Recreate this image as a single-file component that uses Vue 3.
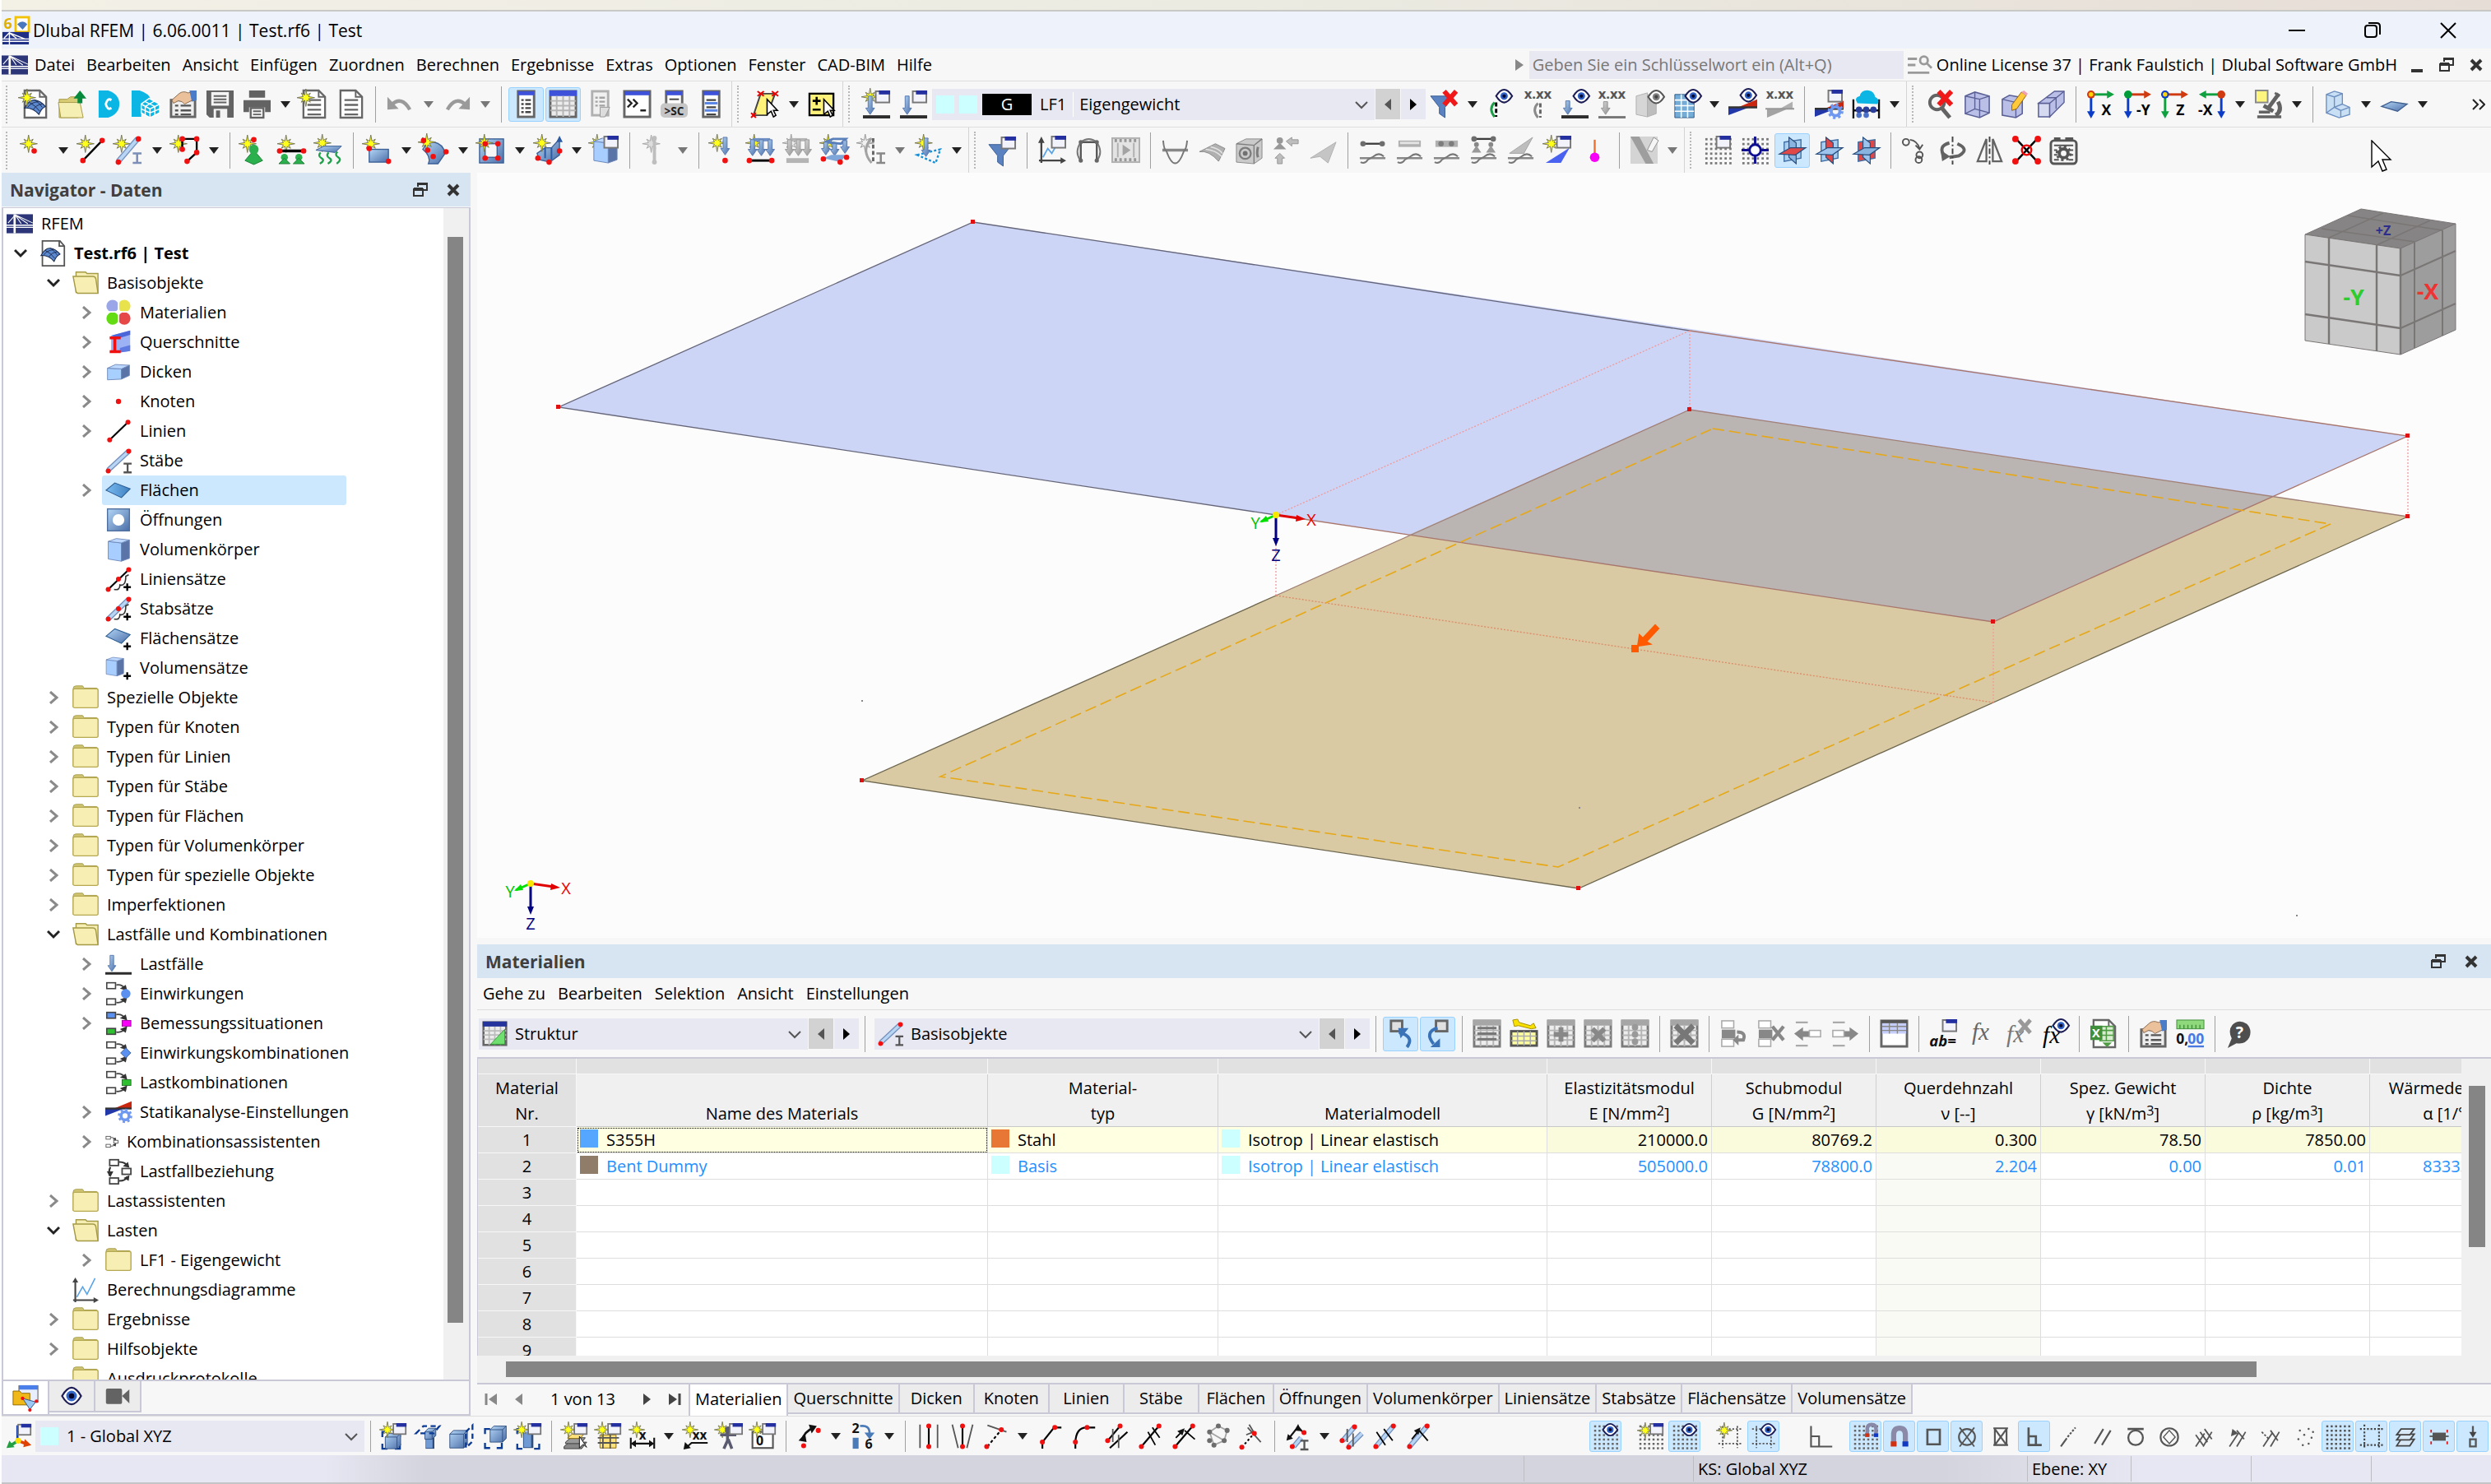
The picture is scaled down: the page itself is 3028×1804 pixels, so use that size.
<script setup>
// ---- small SVG building blocks, all drawn on a 36 x 36 grid ----
const S = (x = 9, y = 10, f = '#ffff1a') => {
  let p = ''
  for (let i = 0; i < 16; i++) {
    const r = i % 2 ? 3.6 : i % 4 === 0 ? 11 : 8
    const a = (i * Math.PI) / 8
    p += (i ? 'L' : 'M') + (x + r * Math.sin(a)).toFixed(1) + ' ' + (y - r * Math.cos(a)).toFixed(1)
  }
  return `<path d="${p}Z" fill="${f}" stroke="#77775a" stroke-width="1"/>`
}
const D = (x, y, r = 3.4, f = '#f01010') => `<circle cx="${x}" cy="${y}" r="${r}" fill="${f}"/>`
const L = (d, c = '#000', w = 2, x = '') => `<path d="${d}" fill="none" stroke="${c}" stroke-width="${w}" ${x}/>`
const F = (d, f, s = 'none', w = 1) => `<path d="${d}" fill="${f}" stroke="${s}" stroke-width="${w}"/>`
const R = (x, y, w, h, f, s = 'none', sw = 1) => `<rect x="${x}" y="${y}" width="${w}" height="${h}" fill="${f}" stroke="${s}" stroke-width="${sw}"/>`
const T = (x, y, t, s = 13, c = '#555', x2 = '') => `<text x="${x}" y="${y}" font-size="${s}" fill="${c}" font-weight="700" text-anchor="middle" ${x2}>${t}</text>`
const W = (x = 17, y = 1) => R(x, y + 1, 17, 14, '#f2f2fa', '#777', 2) + R(x + 4, y, 14, 5, '#2430a0')
const G = (s, o = 0.75) => `<g style="filter:grayscale(1);opacity:${o}">${s}</g>`
const EYE = (x = 26, y = 8) => F(`M${x - 10} ${y}Q${x} ${y - 16} ${x + 10} ${y}Q${x} ${y + 16} ${x - 10} ${y}Z`, '#fff', '#1d1d55', 2.2) + D(x, y, 4.6, '#2d5fc4') + D(x, y, 2.2, '#0a0a30')
const DN = (x, y1, y2, c = 'url(#steel)') => F(`M${x - 2.5} ${y1}H${x + 2.5}V${y2 - 8}H${x + 5.5}L${x} ${y2}L${x - 5.5} ${y2 - 8}H${x - 2.5}Z`, c, '#5878b0')
const I = (x, y, c = '#7c8fb8') => L(`M${x} ${y}H${x + 11}M${x} ${y + 12}H${x + 11}M${x + 5.5} ${y}V${y + 12}`, c, 2.6)
const grid = (x, y, n, m, st, f = '#8a8a8a', s = 4) => { let o = ''; for (let i = 0; i < n; i++) for (let j = 0; j < m; j++) o += R(x + i * st, y + j * st, s, s, f); return o }
const dots = (c = '#444') => grid(2, 3, 6, 6, 6, c, 2.8)
const TBL = (c = '#b5b5b5', h = '#3d52d8') => R(2, 2, 32, 32, '#ececec', '#666', 3) + R(1, 1, 34, 7, h) + L('M2 14H34M2 20H34M2 26H34M10 8V34M18 8V34M26 8V34', c, 2)
const DOC = (lines = true) => F('M5 1H24L32 9V35H5Z', '#fff', '#666', 2.4) + L('M24 1V9H32', '#666', 2) + (lines ? L('M10 13H27M10 19H27M10 25H27M10 31H27', '#666', 2.4) : '')
const MESH = (x, y) => `<g transform="translate(${x},${y})">${F('M0 11Q6 0 13 1Q20 2 26 9Q21 11 18 19Q10 10 0 11Z', '#5b88cf', '#1c2c50', 1.2)}${L('M6 4Q14 8 19 15M13 1Q20 6 22 10M4 10Q8 4 17 3M11 13Q14 7 22 6', '#1c2c50', 1)}</g>`
const LOGO = R(0, 5, 36, 26, '#2b3578') + L('M0 20H36M0 23H36', '#fff', 1.5) + L('M11 5V31', '#fff', 3) + L('M11 7L2 17M12 6L20 18M12 6L29 18M12 6L36 17', '#fff', 1.2)
const BOX = (f1 = '#a8cdff', f2 = '#5a74a8', f3 = '#bdd8ff') => F('M4 7L22 9V34L4 31Z', f1, '#6b86b8') + F('M22 9L33 5V30L22 34Z', f2, '#6b86b8') + F('M4 7L15 3L33 5L22 9Z', f3, '#6b86b8')
const LINE = (a, b, c, d, w = 2.4) => L(`M${a} ${b}L${c} ${d}`, '#000', w) + D(a, b) + D(c, d)
const BAR = (a, b, c, d) => L(`M${a} ${b}L${c} ${d}`, '#7590bd', 7) + L(`M${a} ${b}L${c} ${d}`, '#b8d6f4', 4)
const COMB = (a, b, c) => R(2, 3, 12, 8, a, '#444', 1.8) + R(2, 25, 12, 8, b, '#444', 1.8) + L('M15 6Q24 5 27 12M15 30Q24 31 27 24', '#444', 2) + F('M30 14L20 11L28 6Z', '#333') + F('M30 22L20 26L28 31Z', '#333') + c
const PRISM = (c = '#2bb04e', x = 18) => F(`M${x - 11} 31L${x} 18L${x + 11} 31L${x} 36Z`, c, '#1c7c36') + D(x, 17, 6, c)
const WAVE = L('M2 28H34', '#888', 2.4) + L('M3 33Q8 36 12 30L19 26Q26 20 32 26', '#777', 2)
const AX = (c1, c2, c3, t, flip) => L(flip ? 'M30 6H10' : 'M6 6H27', c1, 3) + F(flip ? 'M2 6L11 1V11Z' : 'M35 6L26 1V11Z', c1) + L(flip ? 'M30 8V28' : 'M6 8V28', c2, 3) + F(flip ? 'M30 36L25 27H35Z' : 'M6 36L1 27H11Z', c2) + D(flip ? 30 : 6, 6, 5, c3) + (flip || c3 === '#009c3a' ? '' : D(6, 6, 2.8, '#ffd400')) + T(flip ? 10 : 25, 32, t, 18, '#000')
const PL = (a, b, c) => F('M8 8L29 5V28L8 32Z', a, '#3f6da3', 1.4) + F('M14 2L23 9V35L14 27Z', b, '#274b7a', 1.2) + F('M2 23L16 15L35 15L22 24Z', c, '#274b7a', 1.2)
const WEDGE = F('M0 18H26L0 28Z', '#2238a8') + F('M36 8V18H12Z', '#c8260f') + L('M0 18H36', '#333', 2.6)
const XXX = T(18, 11, 'x.xx', 17, '#555')
const GEAR = (x, y, c = '#6f98f0') => `<circle cx="${x}" cy="${y}" r="5.5" fill="none" stroke="${c}" stroke-width="4"/><circle cx="${x}" cy="${y}" r="8.4" fill="none" stroke="${c}" stroke-width="3" stroke-dasharray="3.2 3.4"/>`
const HAND = F('M4 13L13 5Q18 1 24 4L30 3V13L20 18Q17 14 12 14L6 17Z', '#eac19b', '#8a6a50') + F('M26 1H35V13L29 15Z', '#4a7cc8')
const FUN = F('M1 8H30L19 22V35L12 30V22Z', '#5a82c0', '#3c5f95')
const STK = F('M3 32L10 26H34L27 35H3Z', '#888', '#333') + F('M5 26L12 20H32L26 28H5Z', '#999', '#333') + F('M8 20L14 15H30L25 21H8Z', '#ffe27a', '#7a5a00') + F('M24 18V34L29 29L34 33Z', '#fff', '#000')
const CUBE2 = (x, y, s) => F(`M${x} ${y + 5}L${x + 5} ${y}H${x + s + 5}V${y + s}L${x + s} ${y + s + 5}H${x}Z`, 'url(#steel)', '#2d4d80') + L(`M${x} ${y + 5}H${x + s}V${y + s + 5}M${x + s} ${y + 5}L${x + s + 5} ${y}`, '#2d4d80', 1)
const CRN = (x, y, w, h) => L(`M${x} ${y + 7}V${y}H${x + 7}M${x + w - 7} ${y}H${x + w}V${y + 7}M${x} ${y + h - 7}V${y + h}H${x + 7}M${x + w - 7} ${y + h}H${x + w}V${y + h - 7}`, '#0b3a94', 2.6)
const GL = (d, w = 2) => L(d, '#555', w)
const CELL = (o) => G(TBL('#aaa', '#999'), 0.85) + o
const FXS = 'font-style="italic" style="font-weight:400;font-family:Liberation Serif,serif"'

const icons = {
  app: R(18, 1, 17, 19, '#fff', '#f2c200', 3) + F('M20 10Q27 3 33 10L27 17Z', '#4a78bf') + R(1, 20, 34, 16, '#1f2f86') + L('M1 29H35M1 32H35M10 20V36M10 21L3 28M10 21L19 28M10 21L30 29', '#fff', 1.5) + T(8, 16, '6', 19, '#e0b000'),
  logo: LOGO,
  new: DOC(false) + MESH(5, 12) + S(8, 10),
  open: F('M2 12H12L16 9H26V35H2Z', '#d8cc74', '#a89a48') + F('M1 16H28L32 35H4Z', '#f6efb4', '#a89a48') + F('M28 1L36 11H31V17H25V11H20Z', '#068a3c'),
  cloud1: F('M5 1H17Q31 6 31 18Q31 30 17 35H5Z', '#0bb6e4') + L('M21 13Q16 10 14 18Q16 26 21 23', '#fff', 3),
  cloud2: F('M0 1H10Q22 5 24 12L12 20V34H0Z', '#0bb6e4') + F('M22 11L35 18V29L23 35L12 29V18Z', '#0bb6e4', '#fff', 1.5) + L('M12 18L23 24L35 18M23 24V35M17 15L29 21V32M29 14L17 21V32M12 24L23 29L35 24', '#fff', 1.5),
  props: R(3, 13, 30, 21, '#eee', '#666', 3) + L('M8 20H12M15 20H28M8 26H12M15 26H28M8 31H12M15 31H28', '#555', 2.4) + HAND,
  save: F('M1 1H35V35H5L1 31Z', '#636363') + R(7, 3, 22, 17, '#f4f4f4') + L('M10 8H26M10 12H26M10 16H26', '#636363', 2) + R(10, 24, 17, 11, '#f4f4f4') + R(13, 26, 5, 9, '#636363'),
  print: R(8, 1, 20, 9, '#636363') + F('M1 13H35V28H28V22H8V28H1Z', '#636363') + R(10, 23, 16, 12, '#f4f4f4', '#636363', 2.4) + L('M13 27H23M13 31H23', '#636363', 2),
  docnew: DOC() + S(8, 10),
  doc: DOC(),
  undo: L('M7 19Q20 7 30 25', '#9a9a9a', 4.5) + F('M2 9V25L16 24Z', '#9a9a9a'),
  redo: L('M29 19Q16 7 6 25', '#9a9a9a', 4.5) + F('M34 9V25L20 24Z', '#9a9a9a'),
  nav: R(8, 2, 20, 32, '#fff', '#666', 3) + R(8, 2, 20, 5, '#3d52d8') + L('M12 13H15M17 13H24M12 18H15M17 18H24M12 23H15M17 23H24M12 28H15M17 28H24', '#444', 2.4),
  table: TBL(),
  list: G(R(8, 2, 20, 30, '#eee', '#999', 3) + L('M12 10H15M17 10H24M12 15H15M17 15H24M12 20H15M17 20H24', '#888', 2.4)) + F('M18 22H30L24 34H18Z', '#ddd', '#999'),
  console: R(2, 2, 32, 32, '#fff', '#666', 3) + R(2, 2, 32, 5, '#3d52d8') + L('M6 12L11 17L6 22M13 12L18 17L13 22M22 26H29', '#222', 2.4),
  sc: R(8, 2, 20, 18, '#fff', '#666', 3) + R(8, 2, 20, 5, '#3d52d8') + L('M12 12H24', '#444', 2) + `<rect x="1" y="17" width="34" height="18" rx="5" fill="#c6c6c6"/>` + T(18, 32, '&gt;SC', 14, '#222'),
  prop2: R(8, 2, 20, 32, '#fff', '#666', 3) + R(8, 2, 20, 5, '#3d52d8') + L('M12 13H24M12 22H24M12 31H24', '#444', 2.4) + L('M10 17H26M10 26H26', '#5a86e8', 3),
  sel: F('M12 5H30L20 32H3Z', '#fff27a', '#444', 2) + L('M26 2L34 8M34 2L26 8M8 2L16 8M16 2L8 8M0 29L6 35M6 29L0 35', '#e00', 2) + F('M20 12V31L25 27L28 34L31 32L28 26H33Z', '#fff', '#000', 1.6),
  selpm: R(2, 5, 30, 27, '#fff27a', '#000', 2.4) + L('M6 14H16M11 9V19M6 25H16', '#000', 2.6) + F('M20 12V31L25 27L28 34L31 32L28 26H33Z', '#fff', '#000', 1.6),
  lcnew: S(10, 9) + DN(10, 8, 31) + W() + R(1, 32, 34, 4, '#2d2d2d'),
  lc: DN(10, 8, 31) + W() + R(1, 32, 34, 4, '#2d2d2d'),
  filtx: FUN + L('M18 2L33 19M33 2L18 19', '#f01818', 6),
  eye1: L('M10 16Q2 24 10 34', '#1f9c48', 3) + L('M12 16V34', '#000', 3, 'stroke-dasharray="5 3"') + EYE(22, 8),
  xxx1: XXX + G(L('M18 17Q10 25 18 35', '#666', 3) + L('M21 17V35', '#333', 3, 'stroke-dasharray="5 3"')),
  eye2: DN(9, 14, 31) + EYE() + R(1, 32, 34, 4, '#2d2d2d'),
  xxx2: XXX + G(DN(10, 15, 31)) + R(1, 33, 34, 3, '#777'),
  eye3: G(F('M2 8L16 4V34L2 31Z', '#ccc', '#999') + F('M16 6L27 10V30L16 34Z', '#aaa', '#999') + EYE(27, 9)),
  eye4: F('M4 6H28V35H4Z', '#74acd8', '#2e5a88') + L('M4 13H28M4 20H28M4 27H28M12 6V35M20 6V35', '#fff', 1.6) + EYE(27, 8),
  eye5: `<g transform="translate(0,4)">${WEDGE}</g>` + EYE(25, 7),
  xxx3: XXX + G(F('M2 24H28L2 35Z', '#888') + F('M34 15V24H18Z', '#999') + L('M0 24H36', '#777', 2)),
  calc: `<g transform="translate(0,6)">${WEDGE}</g>` + W(17, 0) + GEAR(26, 27),
  cloudcalc: L('M2 12V36M34 12V36M2 26H34', '#111', 2.4) + F('M7 17Q2 10 10 8Q12 0 21 1Q28 2 29 9Q36 12 32 18Z', '#0bb6e4') + D(9, 25, 4, '#2b3f9a') + D(18, 25, 4, '#2b3f9a') + D(27, 25, 4, '#2b3f9a') + D(9, 32, 3.4, '#4a70c8') + D(18, 32, 3.4, '#4a70c8'),
  zoomx: `<circle cx="14" cy="16" r="9" fill="none" stroke="#636363" stroke-width="4"/>` + L('M20 23L30 35', '#636363', 5) + L('M16 2L32 19M32 2L16 19', '#f01818', 6),
  iso: F('M3 8L15 3L33 8V29L21 35L3 30Z', '#b9bfe6', '#5a6096', 1.6) + L('M3 8L21 12L33 8M21 12V35M15 3V24L3 30M15 24L33 29', '#5a6096', 1.4),
  isopen: F('M3 12L12 7L28 10V30L20 35L3 32Z', '#b9bfe6', '#5a6096', 1.6) + L('M3 12L20 16L28 10M20 16V35', '#5a6096', 1.4) + F('M15 19L27 3L33 7L21 24L15 26Z', '#ffc93c', '#946000') + F('M27 3L30 1L35 5L33 8Z', '#f0a0b0'),
  iso2: F('M2 17H16V34H2Z', '#d6daf0', '#5a6096', 1.6) + F('M2 17L22 2H34V16L16 34V17Z', '#b9bfe6', '#5a6096', 1.4) + L('M16 17L34 2M12 10H24V24', '#5a6096', 1.4),
  ax: AX('#10a040', '#0a3cc8', '#d03a10', 'X'),
  ay: AX('#d03a10', '#0a3cc8', '#009c3a', '-Y'),
  az: AX('#d03a10', '#10a040', '#0a3cc8', 'Z'),
  anx: AX('#10a040', '#0a3cc8', '#d03a10', '-X', true),
  micro: R(2, 1, 15, 15, '#fdf57e', '#888', 2) + L('M17 24L31 5M12 20L24 27M30 15Q36 26 27 32', '#636363', 5) + L('M4 34H34M6 28H20', '#636363', 3.6) + L('M26 4L32 8', '#636363', 3),
  lshape: F('M4 6L14 2L24 5V18L33 22V31L20 35L4 29Z', '#c9dff4', '#6c8fc0', 1.4) + L('M4 6L14 9V22L4 29M14 9L24 5M14 22L24 18M14 22L22 26V35M22 26L33 22', '#6c8fc0', 1.4),
  plane: F('M2 21L14 15L34 18L22 27Z', 'url(#steel)', '#41608f', 1.4),
  // second row
  node: S(10, 10) + D(17, 19),
  line: S(10, 10) + LINE(7, 31, 31, 6),
  member: S(9, 10) + BAR(5, 32, 29, 4) + D(5, 33) + D(30, 4) + I(23, 22),
  poly: S(9, 10) + L('M14 17V4H32V21L20 32', '#000', 2.4) + D(14, 17) + D(14, 4) + D(32, 4) + D(32, 21) + D(20, 32),
  sup1: S(9, 10) + D(17, 5) + PRISM('#2bb04e', 17),
  sup2: S(11, 10) + LINE(3, 19, 33, 19, 3.6) + D(9, 27, 4.4, '#2bb04e') + D(27, 27, 4.4, '#2bb04e') + F('M2 35L9 28L16 35ZM20 35L27 28L34 35Z', '#2bb04e', '#1c7c36'),
  sup3: S(10, 9) + F('M2 18L12 13H34L26 21Z', 'url(#steel)', '#3b5f95') + L('M8 21Q4 25 9 28T7 35M18 21Q14 25 19 28T17 35M29 20Q25 24 30 27T28 35', '#1ea04c', 2.4),
  surf: S(9, 10) + R(7, 17, 24, 16, 'url(#steel)', '#3b5f95', 1.4) + D(7, 16) + D(31, 32),
  surf2: F('M3 17Q8 8 17 8Q28 10 31 22L22 35H10Q14 26 3 17Z', 'url(#steel)', '#3b5f95', 1.4) + S(8, 8) + D(4, 6) + D(32, 20) + D(16, 26) + D(9, 18),
  open2: R(3, 4, 30, 30, 'url(#steel)', '#3b5f95', 1.4) + R(10, 10, 15, 17, '#f6f6f6', '#3b5f95', 1.4) + S(9, 9) + D(10, 10) + D(26, 10) + D(10, 28) + D(26, 28),
  solid: F('M4 22L14 15H22L32 4V24L20 33L7 30Z', 'url(#steel)', '#3b5f95', 1.4) + L('M14 15V28M22 15V30', '#2c5aa0', 2) + S(10, 9) + D(5, 28) + D(19, 33) + D(32, 19) + F('M32 0L28 8H36Z', '#2c5aa0'),
  solid2: S(8, 9) + BOX() + W(17, 0),
  dis1: G(S(14, 10, '#ccc') + L('M18 3V33', '#999', 4) + D(18, 3, 3, '#999') + D(18, 33, 3, '#999'), 0.6),
  nload: S(10, 9) + DN(20, 2, 24) + D(20, 31),
  mload: S(10, 9) + L('M8 5H30', '#6f90c4', 4) + DN(8, 5, 25) + DN(19, 5, 25) + DN(30, 5, 25) + LINE(4, 31, 32, 31, 3),
  mload2: G(S(10, 9) + L('M8 5H30', '#999', 4) + DN(8, 5, 25) + DN(19, 5, 25) + DN(30, 5, 25) + L('M4 31H32', '#999', 6), 0.7),
  sload: S(10, 9) + L('M6 8L16 4H32L26 10Z', '#5a80bc', 3) + DN(7, 8, 24) + DN(18, 10, 25) + DN(31, 6, 22) + F('M4 28L14 24H33L25 33Z', '#7fa6d8') + D(4, 29) + D(25, 33) + D(33, 27),
  nonl: G(S(10, 9) + L('M18 3Q4 18 18 34', '#888', 3)) + L('M20 3V34', '#666', 3, 'stroke-dasharray="5 3"') + I(24, 22, '#888'),
  sect: S(12, 9) + L('M4 24L33 17L27 34Z', '#1890d8', 2.4, 'stroke-dasharray="3 2.4"') + DN(15, 3, 26),
  filt: `<g transform="translate(0,3)">${FUN}</g>` + W(),
  diag: L('M5 34V6M2 31H33', '#444', 2.4) + F('M5 1L9 9H1ZM36 31L29 27V35Z', '#444') + L('M7 27L13 16L18 22L25 10', '#5aa4e8', 1.8) + W(18, 0),
  frame: L('M8 30V8H28V30', '#555', 2.4) + L('M8 8Q18 0 28 8Q36 20 29 30M8 8Q0 20 7 30', '#777', 2) + D(8, 8, 2.6, '#666') + D(28, 8, 2.6, '#666') + D(8, 31, 2.6, '#666') + D(28, 31, 2.6, '#666'),
  film: G(R(1, 3, 34, 30, '#ddd', '#999', 2) + L('M4 6H33M4 30H33', '#777', 4, 'stroke-dasharray="3 3"') + L('M8 9V27M28 9V27', '#999', 2) + F('M14 11L24 18L14 25Z', '#888')),
  mom: L('M2 18H34', '#888', 3.4) + L('M3 6Q4 18 7 19Q18 50 29 19Q32 17 33 6', '#777', 2),
  stress: G(F('M2 20L22 10L34 16L26 32Q14 18 2 20Z', '#999', '#666') + L('M10 17Q22 18 30 26M16 14Q26 16 31 22', '#ddd', 1.6)),
  cube: G(F('M2 10L14 4H34V28L24 35L2 33Z', '#bbb', '#666') + L('M2 10L24 12L34 4M24 12V35', '#555', 1.4) + `<circle cx="13" cy="22" r="7" fill="none" stroke="#555" stroke-width="2.4"/>` + D(13, 22, 3, '#444') + L('M29 14Q27 22 29 27', '#555', 3)),
  react: G(D(10, 6, 4, '#777') + F('M2 17L10 9L18 17Z', '#777') + F('M18 7L25 2V5H33V10H25V13Z', '#aaa', '#777') + F('M10 22L16 28H13V35H7V28H4Z', '#aaa', '#777')),
  tri: G(F('M2 28L34 8L24 34L14 26Z', '#b5b5b5', '#999')),
  w1: G(LINE(6, 10, 30, 10)) + WAVE,
  w2: G(L('M4 10H32', '#999', 8) + L('M6 9H30', '#ddd', 3)) + WAVE,
  w3: G(L('M4 10H32', '#999', 8) + D(11, 10, 3.4, '#555') + D(24, 10, 3.4, '#555')) + WAVE,
  w4: G(LINE(6, 4, 30, 4)) + D(9, 11, 3, '#888') + D(27, 11, 3, '#888') + F('M3 21L9 12L15 21ZM21 21L27 12L33 21Z', '#999') + WAVE,
  w5: G(F('M4 22L33 2L22 22Z', '#aaa', '#888')) + WAVE,
  w6: F('M3 34L33 15L22 34Z', '#4a62f0') + S(10, 10) + W(17, 0),
  mag: L('M18 5V24', '#e87030', 2.4) + D(18, 27, 6, '#f800f8'),
  edit: G(R(1, 1, 34, 34, '#ccc') + F('M1 1H12L30 35H20Z', '#888') + F('M22 18L30 2L36 6L28 20Z', '#f5f5f5', '#777'), 0.8),
  g1: dots('#777') + W(16, 0),
  g2: dots('#777') + `<circle cx="18" cy="18" r="7" fill="#fff" stroke="#101090" stroke-width="3"/>` + L('M18 1V11M18 25V35M1 18H11M25 18H35', '#101090', 3),
  p1: PL('#a8cff0', '#8ab4e0', '#e04848'),
  p2: PL('#a8cff0', '#e04848', '#9cc4ec'),
  p3: PL('#e04848', '#9cc4ec', '#8ab4e0'),
  m1: GL('M11 5Q20 6 23 16M18 12L23 17L27 11') + `<circle cx="6" cy="8" r="4" fill="none" stroke="#555" stroke-width="2"/><circle cx="23" cy="24" r="4" fill="none" stroke="#555" stroke-width="2"/><circle cx="22" cy="30" r="4" fill="none" stroke="#555" stroke-width="2"/>`,
  m2: L('M8 26Q-1 13 14 9M24 10Q40 17 26 25L14 27', '#636363', 4) + F('M3 18L15 26L5 32Z', '#636363') + L('M18 1V36', '#444', 2, 'stroke-dasharray="7 3 2 3"'),
  m3: L('M14 4V32H3ZM22 4V32H33Z', '#636363', 2.4) + L('M18 1V36', '#444', 2, 'stroke-dasharray="7 3 2 3"'),
  m4: L('M4 3L32 33M32 3L4 33', '#000', 2.4) + D(4, 4, 4) + D(32, 4, 4) + D(4, 32, 4) + D(32, 32, 4) + `<circle cx="18" cy="18" r="6" fill="none" stroke="#e00" stroke-width="2.4"/>`,
  m5: `<rect x="2" y="6" width="32" height="29" rx="4" fill="none" stroke="#555" stroke-width="3"/>` + L('M6 4H14M20 4H30', '#555', 4) + GL('M6 12H30M6 18H10M26 18H30M6 24H10M26 24H30M6 30H12M24 30H30') + GEAR(18, 22, '#555'),
  // tree
  file: F('M4 1H28L34 8V35H4Z', '#fff', '#555', 2) + L('M27 1V8H34', '#555', 2) + MESH(2, 10),
  folder: F('M1 6Q1 2 5 2H14L16 5H33Q35 5 35 8V31H1Z', '#cfc472', '#a59a45') + `<rect x="1" y="6" width="34" height="26" rx="2" fill="#f7eeb4" stroke="#b5a850" stroke-width="1.4"/>`,
  folderopen: F('M5 3H18L20 5H35V31H5Z', '#f7eeb4', '#a59a45', 1.6) + F('M1 9H28Q31 9 32 12L35 32H7L5 30Z', '#f7eeb4', '#a59a45', 1.6),
  mat: D(10, 9, 8.5, '#9aa6e8') + D(26, 9, 8.5, '#e8e24c') + D(10, 26, 8.5, '#63dc14') + D(26, 26, 8.5, '#e64848') + L('M18 0V34M2 17H34', '#fff', 2),
  sec: F('M8 9L34 2V30L20 32L8 30Z', '#9cb2f4') + F('M8 9L34 2V8L20 12Z', '#4a66d8') + F('M20 26L34 22V30L20 32Z', '#5f7ae0') + L('M6 12H21M6 31H21M13 12V31', '#f01010', 4),
  thick: F('M3 13L22 14V28L3 29Z', '#a8d0ff', '#6b86b8') + F('M22 14L33 9V23L22 28Z', '#5a74a8', '#6b86b8') + F('M3 13L14 8L33 9L22 14Z', '#bdd8ff', '#6b86b8'),
  tnode: D(18, 18, 3.6),
  tline: LINE(6, 30, 31, 6),
  tmember: BAR(4, 31, 32, 5) + D(4, 32) + D(32, 5) + I(25, 22, '#555'),
  tsurf: F('M1 18L13 8L34 16L22 28Z', 'url(#surf)', '#2d5f95', 1.2),
  topen: R(3, 3, 30, 30, 'url(#steel)', '#4f6f9f', 1.6) + D(18, 18, 8, '#fff'),
  tsolid: BOX(),
  tls: LINE(4, 32, 32, 5) + D(18, 18) + L('M12 32Q20 34 20 26Q28 28 28 14L32 12', '#333', 1.8) + L('M30 24V34M25 29H35', '#000', 2.6),
  tms: BAR(4, 32, 32, 5) + D(4, 32) + D(32, 5) + D(18, 18) + L('M12 32Q20 34 20 26Q28 28 28 14L32 12', '#333', 1.8) + L('M30 24V34M25 29H35', '#000', 2.6),
  tss: F('M1 15L13 5L34 13L22 25Z', 'url(#steel)', '#2d5f95', 1.2) + L('M30 24V34M25 29H35', '#000', 2.6),
  tvs: `<g transform="translate(-2,1) scale(.82)">${BOX()}</g>` + L('M30 24V34M25 29H35', '#000', 2.6),
  tlc: DN(9, 6, 28) + R(0, 29, 36, 3.4, '#2d2d2d'),
  c1: COMB('#fff', '#fff', D(28, 18, 6.5, '#5a90f0')),
  c2: COMB('#5a90f0', '#2fc032', R(23, 14, 12, 8, '#f800f8', '#a000a0')),
  c3: COMB('#fff', '#fff', F('M28 11L35 18L28 25L21 18Z', '#5a90f0', '#3a5a90')),
  c4: COMB('#fff', '#fff', R(23, 14, 12, 8, '#2fc032', '#1c7020')),
  c5: COMB('#fff', '#fff', R(23, 14, 12, 8, '#fff', '#444', 1.8)),
  c6: R(6, 2, 12, 8, '#fff', '#444', 2) + R(6, 27, 12, 8, '#fff', '#444', 2) + R(23, 14, 12, 8, '#fff', '#444', 2) + L('M19 5Q28 5 30 11M19 31Q28 31 30 25M7 12Q4 18 6 24', '#333', 2.4) + F('M33 13L24 11L31 5ZM33 23L25 27L32 31ZM2 18H11L7 26Z', '#333'),
  stat: `<g transform="translate(0,-5)">${WEDGE}</g>` + GEAR(27, 23),
  tdiag: L('M4 35V5M1 32H33', '#444', 2.4) + F('M4 1L8 8H0ZM36 32L29 28V36Z', '#444') + L('M6 28L14 14L20 24L31 2', '#5aa4e8', 1.8),
  // navigator tabs
  t1: R(9, 2, 26, 22, '#e8eefb', '#888', 1.6) + R(9, 1, 26, 6, '#4a7ee8') + F('M1 9H10L13 12H24V28H1Z', '#f0b818', '#8a6400') + F('M14 19L32 24L24 34Z', '#9cc8f4', '#2c4c80') + D(14, 19, 2.4) + D(33, 23, 2.4) + D(24, 35, 2.4),
  eye: F('M2 18Q18 -10 34 18Q18 46 2 18Z', '#fff', '#1d1d55', 3) + D(18, 18, 9, '#3468c8') + D(18, 18, 4.6, '#08082c'),
  cam: `<rect x="2" y="8" width="22" height="21" rx="2" fill="#636363"/>` + F('M24 18L34 9V28Z', '#636363'),
  // table toolbar
  struct: TBL('#bbb', '#24349c') + F('M32 12V33H12Z', '#6fe070', '#2a9030'),
  act1: R(6, 2, 14, 13, '#e0e0e0', '#666', 3) + L('M16 16Q36 22 26 35', '#3a72b8', 4) + F('M15 11H28L18 24Z', '#3a72b8'),
  act2: R(16, 2, 14, 13, '#e0e0e0', '#666', 3) + L('M18 11Q1 16 13 31', '#3a72b8', 4) + F('M9 35H21V24Z', '#3a72b8'),
  k1: CELL(L('M6 11H30M6 18H30M6 25H30', '#777', 3)),
  k2: R(2, 15, 32, 18, '#ffffa0', '#555', 3) + L('M2 21H34M2 27H34M10 15V33M18 15V33M26 15V33', '#aaa', 1.6) + F('M4 1L10 0L12 4L26 8L30 5L33 11L27 12L11 8L6 9Z', '#f8e000', '#a89000'),
  k3: CELL(L('M18 10V28M9 19H27', '#888', 6)),
  k4: CELL(L('M11 12L26 27M26 12L11 27', '#888', 6)),
  k5: CELL(D(18, 10, 4, '#999') + D(18, 19, 4, '#999') + D(18, 28, 4, '#999')),
  kx: CELL(L('M7 8L29 30M29 8L7 30', '#777', 7)),
  r1: R(3, 2, 15, 9, '#fff', '#aaa', 1.6) + R(3, 13, 17, 11, '#888') + R(3, 25, 15, 9, '#fff', '#aaa', 1.6) + L('M22 16Q34 16 30 26H22', '#888', 4) + F('M24 19V33L17 26Z', '#888'),
  r2: R(3, 2, 15, 9, '#fff', '#aaa', 1.6) + R(3, 13, 17, 11, '#888') + R(3, 25, 15, 9, '#fff', '#aaa', 1.6) + L('M20 9L34 26M34 9L20 26', '#888', 4.4),
  r3: L('M3 4H18M3 33H18', '#aaa', 2.4) + F('M1 18L12 10V15H20V22H12V27Z', '#888') + R(20, 14, 14, 8, '#fff', '#aaa', 1.6),
  r4: L('M3 4H18M3 33H18', '#aaa', 2.4) + F('M35 18L24 10V15H16V22H24V27Z', '#888') + R(3, 14, 14, 8, '#fff', '#aaa', 1.6),
  ktab: R(2, 2, 32, 32, '#fff', '#666', 3) + R(3, 5, 30, 13, '#c5cdfa') + L('M3 9H33M3 14H33M12 5V18M22 5V18', '#888', 1.4) + R(2, 1, 32, 4, '#555'),
  ab: W(17, 0) + T(17, 34, 'ab=', 19, '#111', 'font-style="italic"'),
  fx: T(18, 26, 'fx', 30, '#666', FXS),
  fxx: T(15, 29, 'fx', 30, '#777', FXS) + L('M20 1L34 17M34 1L20 17', '#999', 5),
  fxe: T(14, 30, 'fx', 30, '#000', FXS) + EYE(26, 8),
  xls: DOC(false) + R(13, 9, 17, 18, '#d8ecd0', '#4f9c44', 1.6) + L('M13 14H30M13 20H30M21 9V27', '#4f9c44', 1.6) + R(1, 8, 15, 18, '#3f8f3c') + T(8, 23, 'X', 15, '#fff') + F('M16 29H28L22 35Z', '#4f9c44'),
  num: R(1, 1, 34, 11, '#8fd97c', '#3f8f3c') + L('M5 7V12M10 7V12M15 7V12M20 7V12M25 7V12M30 7V12', '#3f8f3c', 1.4) + T(8, 31, '0,', 18, '#111') + T(25, 31, '00', 18, '#4878e0') + L('M15 34H35', '#4878e0', 2.4),
  help: `<path d="M8 24Q3 14 9 7Q17 -1 27 6Q34 13 30 23Q25 32 14 30L3 36Z" fill="#4e4e4e"/>` + T(18, 24, '?', 20, '#fff'),
  // bottom toolbar
  cs: L('M16 22V3', '#1038a0', 3) + W(17, 1) + L('M17 24L6 31', '#20a040', 4) + F('M1 34L5 24L12 33Z', '#20a040') + L('M17 24L27 28', '#e04000', 4) + F('M35 30L26 22L24 33Z', '#e04000') + D(17, 24, 4, '#ffe000'),
  v0: CRN(2, 12, 24, 23) + CUBE2(6, 14, 16) + S(9, 9) + W(17, 0),
  v1: L('M21 16V35', '#2d4d80', 12) + L('M20 16V34', '#6f9ad4', 9) + CUBE2(14, 7, 10) + L('M2 14L12 4H34L26 14Z', '#0b3a94', 2.6, 'stroke-dasharray="7 5"'),
  v2: CUBE2(2, 10, 19) + L('M24 12L33 3V25L24 34Z', '#0b3a94', 2.6, 'stroke-dasharray="7 5"'),
  v3: CRN(4, 8, 23, 26) + CUBE2(11, 4, 17),
  v4: CRN(2, 8, 30, 27) + L('M17 12V34', '#2d4d80', 14) + L('M16 12V33', '#6f9ad4', 10) + S(8, 9) + W(17, 0),
  s1: STK + S(9, 9) + W(17, 0),
  s2: F('M6 16H28V34H6Z', '#ffe27a', '#7a5a00') + L('M3 20H32M3 27H32M10 14V35M20 14V35', '#555', 2) + S(9, 9) + W(17, 0),
  dim: S(10, 9) + T(18, 22, 'x', 17, '#111') + L('M2 20V35M34 20V35M4 28H32', '#111', 2.4) + F('M2 28L9 23V33ZM34 28L27 23V33Z', '#111'),
  dimxx: S(10, 9) + T(23, 23, 'xx', 17, '#111') + L('M34 27H12L4 34', '#111', 2.4) + F('M1 36L3 26L11 34Z', '#111'),
  per: S(8, 9) + L('M15 12V24L10 35M16 22L21 35M5 16H27', '#5a5a70', 4) + D(16, 9, 4.4, '#5a5a70') + W(18, 0),
  obj: R(3, 12, 28, 22, '#fff', '#555', 2.4) + T(13, 30, '0', 18, '#111') + S(9, 9) + W(17, 0),
  b1: L('M8 24Q10 12 24 6', '#111', 3) + F('M12 14L14 26L3 24ZM17 2L28 4L21 14Z', '#111') + D(10, 31) + D(30, 10),
  b2: T(8, 14, '2', 18, '#111') + T(26, 35, '6', 18, '#111') + R(4, 20, 8, 15, '#4a7ab8') + L('M14 4Q27 2 27 14', '#4a7ab8', 3) + F('M20 13H34L27 22Z', '#4a7ab8'),
  n1: GL('M6 2V34M30 2V34') + LINE(18, 4, 18, 32),
  n2: GL('M4 2L12 34M32 2L24 34') + LINE(18, 4, 18, 32),
  n3: GL('M6 3L32 12') + L('M6 32L25 9', '#000', 2.4, 'stroke-dasharray="4 3"') + D(5, 32) + D(25, 9),
  n4: L('M8 35V26L24 6H34', '#000', 2.4) + D(8, 26) + D(25, 6),
  n5: L('M7 35V26Q8 6 22 6H34', '#000', 2.4) + D(7, 26) + D(23, 6),
  n6: LINE(5, 24, 22, 4) + L('M8 34L32 12', '#000', 2.4) + GL('M12 8V26M20 16V34'),
  n7: LINE(5, 32, 29, 4) + L('M14 12L24 30M20 6L30 20', '#000', 2),
  n8: LINE(5, 32, 29, 4) + L('M6 20L14 12M18 10L32 22', '#000', 2) + F('M18 7L15 17L8 11Z', '#111'),
  n9: G(L('M6 12L18 4L30 10L26 24L12 30L6 12L26 24', '#888', 2) + D(6, 12) + D(18, 4) + D(30, 10) + D(26, 24) + D(12, 30) + D(6, 24)),
  n10: GL('M12 6L30 26M14 2L20 12L10 16') + L('M4 33L20 15', '#000', 2.4, 'stroke-dasharray="3 3"') + D(4, 33) + D(21, 14),
  q1: L('M6 20L18 5L24 12', '#111', 2.4) + F('M18 1L22 11L13 10ZM2 24L4 15L11 21Z', '#111') + BAR(12, 32, 22, 20) + D(10, 32) + D(26, 13) + I(21, 24, '#555'),
  q2: BAR(6, 24, 22, 5) + BAR(14, 32, 32, 14) + GL('M12 8V26M20 14V32') + D(5, 24) + D(22, 5) + D(14, 33),
  q3: BAR(5, 32, 29, 4) + L('M6 12L18 30M16 8L28 24', '#000', 2) + D(5, 32) + D(29, 4),
  q4: BAR(5, 32, 29, 4) + L('M8 22L18 10M18 10L30 24', '#000', 2) + F('M20 6L17 16L11 10Z', '#111') + D(5, 32) + D(29, 4),
  gr1: dots('#666') + EYE(24, 9),
  gr2: dots('#666') + S(10, 10) + W(17, 0),
  gr3: dots('#666') + EYE(24, 9),
  gr4: L('M8 4V34M28 4V34M2 8H34M2 28H34', '#555', 2, 'stroke-dasharray="2.4 2.4"') + S(10, 10),
  gr5: L('M8 4V34M28 4V34M2 8H34M2 28H34', '#555', 2, 'stroke-dasharray="2.4 2.4"') + EYE(24, 9),
  ang: GL('M5 4V32H34M5 18H16V32', 2.4),
  snap: dots('#666') + L('M20 16V8Q20 2 26 2Q32 2 32 8V16', '#8888a8', 5) + R(17, 14, 6, 5, '#d03010') + R(29, 14, 6, 5, '#1038c0'),
  magnet: L('M10 26V16Q10 7 18 7Q26 7 26 16V26', '#8a8aa8', 7) + R(6, 25, 8, 7, '#d03010') + R(22, 25, 8, 7, '#1038c0'),
  z1: GL('M10 9H27V29H10Z', 3),
  z2: GL('M8 6L28 32M28 6L8 32') + `<circle cx="18" cy="19" r="11" fill="none" stroke="#555" stroke-width="2.4"/>`,
  z3: GL('M8 7H28M8 30H28M10 8L26 30M26 8L10 30M10 8V30M26 8V30', 2.4),
  z4: GL('M10 6V30H28M10 18H20V30', 3),
  z5: L('M8 32L18 18L28 6', '#555', 2.4, 'stroke-dasharray="14 2 3 2 3 2 3 2"'),
  z6: GL('M8 28L20 8M18 30L30 10', 2.4),
  z7: GL('M7 8H29', 3) + `<circle cx="18" cy="20" r="10" fill="none" stroke="#555" stroke-width="2.6"/>`,
  z8: `<circle cx="18" cy="19" r="12" fill="none" stroke="#555" stroke-width="2.4"/>` + GL('M18 10L26 19L18 28L10 19Z', 1.6),
  z9: GL('M8 32L20 14M18 32L30 12M8 16L18 30M14 12L24 26M20 8L30 22'),
  z10: GL('M8 32L20 14M18 32L30 12M18 10L28 22') + F('M12 8L20 14L10 18Z', '#555'),
  z11: GL('M8 32L20 14M18 32L30 12M18 10L28 24') + L('M6 12L16 22', '#555', 2, 'stroke-dasharray="3 2"'),
  z12: D(12, 10, 1.4, '#555') + D(24, 8, 1.4, '#555') + D(18, 16, 1.4, '#555') + D(28, 20, 1.4, '#555') + D(10, 22, 1.4, '#555') + D(16, 30, 1.4, '#555') + D(24, 28, 1.4, '#555') + D(30, 12, 1.4, '#555'),
  z13: dots('#555'),
  z14: L('M8 2V34M28 2V34M2 8H34M2 30H34', '#444', 2.4, 'stroke-dasharray="2.4 2.4"'),
  z15: F('M12 22H30L24 31H6Z', '#d8e8f4', '#444', 2) + F('M12 15H30L24 23H6Z', '#d8e8f4', '#444', 2) + F('M12 8H30L24 16H6Z', '#d8e8f4', '#444', 2),
  z16: R(9, 13, 18, 11, '#555') + L('M7 9V13M29 9V13M7 25V29M29 25V29', '#e01010', 2) + L('M5 18H31', '#555', 2),
  z17: GL('M18 4V16M14 22H22V32H14Z', 2.6) + F('M18 20L13 12H23Z', '#444'),
}

// ---- toolbars: '>' drop-down, '<' greyed drop-down, '|' separator, '#' group edge, '*' pressed ----
const bar = (s) => s.trim().split(/\s+/).map((k) => ({ k: k.replace('*', ''), on: k.endsWith('*') }))
const top1 = bar('new open cloud1 cloud2 props save print > docnew doc | undo < redo < | nav* table* list console sc prop2 # sel > selpm # lcnew lc')
const top1b = bar('filtx > eye1 xxx1 eye2 xxx2 eye3 eye4 > eye5 xxx3 | calc cloudcalc > # zoomx iso isopen iso2 | ax ay az anx > micro > | lshape > plane >')
const top2 = bar('node > line member > poly > | sup1 sup2 sup3 | surf > surf2 > open2 > solid > solid2 | dis1 < | nload mload mload2 sload nonl < sect > # filt | diag frame film | mom stress cube react tri | w1 w2 w3 w4 w5 w6 mag | edit < # g1 g2 p1* p2 p3 | m1 m2 m3 m4 m5')
const tblBar = bar('| act1* act2* | k1 k2 k3 k4 k5 | kx | r1 r2 r3 r4 | ktab | ab fx fxx fxe | xls | props num | help')
const low1 = bar('| v0 v1 v2 v3 v4 | s1 s2 dim > dimxx per obj | b1 > b2 > | n1 n2 n3 > n4 n5 n6 n7 n8 n9 n10 | q1 > q2 q3 q4')
const low2 = bar('gr1* _ gr2 gr3* _ gr4 gr5* _ _ ang _ snap* magnet* z1* z2* z3 z4* z5 z6 z7 z8 z9 z10 z11 z12 z13* z14* z15* z16* z17*')

const menu = ['Datei', 'Bearbeiten', 'Ansicht', 'Einfügen', 'Zuordnen', 'Berechnen', 'Ergebnisse', 'Extras', 'Optionen', 'Fenster', 'CAD-BIM', 'Hilfe']
const tblMenu = ['Gehe zu', 'Bearbeiten', 'Selektion', 'Ansicht', 'Einstellungen']

// [level, expander, icon, label, flag]
const tree = [
  [1, 'v', 'file', 'Test.rf6 | Test', 'bold'],
  [2, 'v', 'folderopen', 'Basisobjekte'],
  [3, '>', 'mat', 'Materialien'],
  [3, '>', 'sec', 'Querschnitte'],
  [3, '>', 'thick', 'Dicken'],
  [3, '>', 'tnode', 'Knoten'],
  [3, '>', 'tline', 'Linien'],
  [3, '', 'tmember', 'Stäbe'],
  [3, '>', 'tsurf', 'Flächen', 'sel'],
  [3, '', 'topen', 'Öffnungen'],
  [3, '', 'tsolid', 'Volumenkörper'],
  [3, '', 'tls', 'Liniensätze'],
  [3, '', 'tms', 'Stabsätze'],
  [3, '', 'tss', 'Flächensätze'],
  [3, '', 'tvs', 'Volumensätze'],
  [2, '>', 'folder', 'Spezielle Objekte'],
  [2, '>', 'folder', 'Typen für Knoten'],
  [2, '>', 'folder', 'Typen für Linien'],
  [2, '>', 'folder', 'Typen für Stäbe'],
  [2, '>', 'folder', 'Typen für Flächen'],
  [2, '>', 'folder', 'Typen für Volumenkörper'],
  [2, '>', 'folder', 'Typen für spezielle Objekte'],
  [2, '>', 'folder', 'Imperfektionen'],
  [2, 'v', 'folderopen', 'Lastfälle und Kombinationen'],
  [3, '>', 'tlc', 'Lastfälle'],
  [3, '>', 'c1', 'Einwirkungen'],
  [3, '>', 'c2', 'Bemessungssituationen'],
  [3, '', 'c3', 'Einwirkungskombinationen'],
  [3, '', 'c4', 'Lastkombinationen'],
  [3, '>', 'stat', 'Statikanalyse-Einstellungen'],
  [3, '>', 'c5', 'Kombinationsassistenten', 'small'],
  [3, '', 'c6', 'Lastfallbeziehung'],
  [2, '>', 'folder', 'Lastassistenten'],
  [2, 'v', 'folderopen', 'Lasten'],
  [3, '>', 'folder', 'LF1 - Eigengewicht'],
  [2, '', 'tdiag', 'Berechnungsdiagramme'],
  [2, '>', 'folder', 'Ergebnisse'],
  [2, '>', 'folder', 'Hilfsobjekte'],
  [2, '', 'folder', 'Ausdruckprotokolle'],
]

const units = [
  ['Elastizitätsmodul', 'E [N/mm', '2', ']'],
  ['Schubmodul', 'G [N/mm', '2', ']'],
  ['Querdehnzahl', 'ν [--]', '', ''],
  ['Spez. Gewicht', 'γ [kN/m', '3', ']'],
  ['Dichte', 'ρ [kg/m', '3', ']'],
  ['Wärmedehnzahl', 'α [1/°C]', '', ''],
]
const rows = [
  { c: ['#55a6ff', 'S355H', '#e87735', 'Stahl', '#ccffff', 'Isotrop | Linear elastisch'], v: ['210000.0', '80769.2', '0.300', '78.50', '7850.00', ''] },
  { c: ['#8f7d6a', 'Bent Dummy', '#ccffff', 'Basis', '#ccffff', 'Isotrop | Linear elastisch'], v: ['505000.0', '78800.0', '2.204', '0.00', '0.01', '8333333333.3'] },
  ...Array.from({ length: 7 }, () => ({ c: null, v: ['', '', '', '', '', ''] })),
]
const tabs = ['Materialien', 'Querschnitte', 'Dicken', 'Knoten', 'Linien', 'Stäbe', 'Flächen', 'Öffnungen', 'Volumenkörper', 'Liniensätze', 'Stabsätze', 'Flächensätze', 'Volumensätze']
const nodes = [[1183, 270], [679, 495], [2054, 498], [2927, 530], [2927, 628], [2423, 756], [1048, 949], [1919, 1080]]
</script>

<template>
  <div class="window">
    <svg class="defs" width="0" height="0" aria-hidden="true">
      <defs>
        <linearGradient id="steel" x1="0" y1="0" x2="1" y2="1"><stop offset="0" stop-color="#b4d6f6" /><stop offset="1" stop-color="#4a6ea8" /></linearGradient>
        <linearGradient id="surf" x1="0" y1="0" x2="1" y2="0"><stop offset="0" stop-color="#7cbcf2" /><stop offset="1" stop-color="#3f80c0" /></linearGradient>
      </defs>
    </svg>
    <div class="backdrop"></div>

    <header class="title">
      <svg class="ico" viewBox="0 0 36 36" v-html="icons.app"></svg>
      <span class="title-text">Dlubal RFEM | 6.06.0011 | Test.rf6 | Test</span>
      <button class="cap" aria-label="Minimieren"><svg viewBox="0 0 20 20"><path d="M0 10H20" stroke="#000" stroke-width="2" /></svg></button>
      <button class="cap" aria-label="Wiederherstellen"><svg viewBox="0 0 20 20" fill="none" stroke="#000" stroke-width="2"><rect x="1" y="4" width="14" height="14" rx="3" /><path d="M5 1H15Q19 1 19 5V15" /></svg></button>
      <button class="cap" aria-label="Schließen"><svg viewBox="0 0 20 20"><path d="M1 1L19 19M19 1L1 19" stroke="#000" stroke-width="2" /></svg></button>
    </header>

    <nav class="menubar">
      <svg class="ico" viewBox="0 0 36 36" v-html="icons.logo"></svg>
      <button v-for="m in menu" :key="m" class="menu">{{ m }}</button>
      <span class="grow"></span>
      <svg class="searcharrow" viewBox="0 0 10 14"><path d="M0 0L10 7L0 14Z" fill="#888" /></svg>
      <input class="search" type="text" placeholder="Geben Sie ein Schlüsselwort ein (Alt+Q)" aria-label="Suche" />
      <svg class="findicon" viewBox="0 0 32 26" fill="none" stroke="#9a9a9a" stroke-width="3"><path d="M0 5H12M0 13H10M0 23H28" /><circle cx="21" cy="7" r="5" /><path d="M25 11L31 17" /></svg>
      <span class="license">Online License 37 | Frank Faulstich | Dlubal Software GmbH</span>
      <button class="mdi" aria-label="Minimieren"><svg viewBox="0 0 18 20"><path d="M2 17H16" stroke="#333" stroke-width="4" /></svg></button>
      <button class="mdi" aria-label="Wiederherstellen"><svg viewBox="0 0 18 20" fill="none" stroke="#333" stroke-width="2"><path d="M6 6V2H17V10H13M5 3H18" /><rect x="1" y="9" width="11" height="8" /><path d="M1 9H12" stroke-width="4" /></svg></button>
      <button class="mdi" aria-label="Schließen"><svg viewBox="0 0 18 20"><path d="M3 4L15 16M15 4L3 16" stroke="#333" stroke-width="4" /></svg></button>
    </nav>

    <div class="toolbar first">
      <i class="grip"></i>
      <template v-for="(b, i) in top1" :key="i">
        <i v-if="b.k === '|'" class="sep"></i>
        <i v-else-if="b.k === '#'" class="edge"></i>
        <button v-else-if="b.k === '>' || b.k === '<'" class="dd" :class="{ off: b.k === '<' }" aria-label="Mehr"></button>
        <button v-else class="tb" :class="{ on: b.on }"><svg class="ico" viewBox="0 0 36 36" v-html="icons[b.k]"></svg></button>
      </template>
      <label class="combo lf">
        <i class="sw"></i><i class="sw"></i><b class="g">G</b><span class="lfno">LF1</span>
        <select aria-label="Lastfall"><option>Eigengewicht</option></select>
        <svg class="chev" viewBox="0 0 16 10"><path d="M1 1L8 8L15 1" fill="none" stroke="#555" stroke-width="2" /></svg>
      </label>
      <button class="step prev" aria-label="Zurück"></button><button class="step next" aria-label="Weiter"></button>
      <template v-for="(b, i) in top1b" :key="'b' + i">
        <i v-if="b.k === '|'" class="sep"></i>
        <i v-else-if="b.k === '#'" class="edge"></i>
        <button v-else-if="b.k === '>' || b.k === '<'" class="dd" aria-label="Mehr"></button>
        <button v-else class="tb"><svg class="ico" viewBox="0 0 36 36" v-html="icons[b.k]"></svg></button>
      </template>
      <span class="grow"></span>
      <button class="more" aria-label="Weitere"><svg viewBox="0 0 16 14"><path d="M1 1L7 7L1 13M9 1L15 7L9 13" fill="none" stroke="#222" stroke-width="2" /></svg></button>
    </div>

    <div class="toolbar second">
      <i class="grip"></i>
      <template v-for="(b, i) in top2" :key="i">
        <i v-if="b.k === '|'" class="sep"></i>
        <i v-else-if="b.k === '#'" class="edge"></i>
        <button v-else-if="b.k === '>' || b.k === '<'" class="dd" :class="{ off: b.k === '<' }" aria-label="Mehr"></button>
        <button v-else class="tb" :class="{ on: b.on }"><svg class="ico" viewBox="0 0 36 36" v-html="icons[b.k]"></svg></button>
      </template>
      <svg class="cursor" viewBox="0 0 26 40"><path d="M1 1V33L9 26L14 38L19 36L14 24H24Z" fill="#fff" stroke="#000" stroke-width="1.4" /></svg>
    </div>

    <div class="main">
      <aside class="navigator">
        <div class="panel-head">
          <h2>Navigator - Daten</h2>
          <button class="mdi" aria-label="Abdocken"><svg viewBox="0 0 18 20" fill="none" stroke="#333" stroke-width="2"><path d="M6 6V2H17V10H13M5 3H18" /><rect x="1" y="9" width="11" height="8" /><path d="M1 9H12" stroke-width="4" /></svg></button>
          <button class="mdi" aria-label="Schließen"><svg viewBox="0 0 18 20"><path d="M3 4L15 16M15 4L3 16" stroke="#333" stroke-width="4" /></svg></button>
        </div>
        <div class="treebox">
          <ul class="tree">
            <li class="root"><svg class="tico" viewBox="0 0 36 36" v-html="icons.logo"></svg><span>RFEM</span></li>
            <li v-for="(t, i) in tree" :key="i" :class="['l' + t[0], t[4]]">
              <span class="exp">
                <svg v-if="t[1] === '>'" viewBox="0 0 16 16"><path d="M4 1L12 8L4 15" fill="none" stroke="#8a8a8a" stroke-width="3" /></svg>
                <svg v-else-if="t[1] === 'v'" viewBox="0 0 16 16"><path d="M1 4L8 11L15 4" fill="none" stroke="#222" stroke-width="3" /></svg>
              </span>
              <span class="node"><svg class="tico" viewBox="0 0 36 36" v-html="icons[t[2]]"></svg><span>{{ t[3] }}</span></span>
            </li>
          </ul>
          <div class="vtrack"><i class="vthumb"></i></div>
        </div>
        <div class="navtabs">
          <button class="active" aria-label="Daten"><svg class="tico" viewBox="0 0 36 36" v-html="icons.t1"></svg></button>
          <button aria-label="Zeigen"><svg class="tico s" viewBox="0 0 36 36" v-html="icons.eye"></svg></button>
          <button aria-label="Ansichten"><svg class="tico" viewBox="0 0 36 36" v-html="icons.cam"></svg></button>
        </div>
      </aside>

      <div class="work">
        <svg class="scene" viewBox="580 210 2448 920" preserveAspectRatio="xMinYMin meet">
          <path d="M1183 270L2927 530L2423 756L679 495Z" fill="#cdd5f7" />
          <path d="M2054 498L2927 628L1919 1080L1048 949Z" fill="#d9caa3" />
          <path d="M1713 650L2054 498L2762 604L2423 756Z" fill="#bab4b2" />
          <g fill="none" stroke-width="1.3">
            <path d="M2054 402L1183 270L679 495L1551 626" stroke="#66667a" />
            <path d="M2054 402L2927 530L2423 756L1551 626" stroke="#a8766c" />
            <path d="M1551 724L1048 949L1919 1080L2927 628" stroke="#6e6750" />
            <path d="M1551 724L2054 498L2927 628" stroke="#a08078" />
            <path d="M2054 402V498M2927 530V628M2423 756V854M1551 626V724M1551 626L2054 402" stroke="#f09a9a" stroke-dasharray="2 2" />
            <path d="M1551 724L2423 854" stroke="#df8a66" stroke-dasharray="2 2" />
            <path d="M2082 521L2833 637L1894 1054L1143 944Z" stroke="#e6a817" stroke-width="1.6" stroke-dasharray="14 6" />
          </g>
          <rect v-for="(n, i) in nodes" :key="i" :x="n[0] - 3" :y="n[1] - 3" width="5" height="5" fill="#e01010" />
          <g fill="#888"><rect x="1047" y="851" width="2" height="2" /><rect x="1919" y="981" width="2" height="2" /><rect x="2791" y="1112" width="2" height="2" /></g>
          <g fill="#ff5a00"><rect x="1983" y="784" width="9" height="9" /><path d="M2012 760L2016 764L2001 780L2006 783L1991 785L1993 772L1997 776Z" stroke="#ff5a00" stroke-width="2" /></g>
          <g v-for="(p, i) in [[1551, 626], [645, 1074]]" :key="'t' + i" :transform="`translate(${p[0]},${p[1]})`">
            <path d="M0 0L-18 8" stroke="#00e000" stroke-width="3" /><path d="M-20 9L-12 1L-9 8Z" fill="#00e000" />
            <path d="M0 0L28 4" stroke="#e00000" stroke-width="3" /><path d="M36 5L25 0L24 8Z" fill="#e00000" />
            <path d="M0 0V30" stroke="#000080" stroke-width="3" /><path d="M0 38L-4 28H4Z" fill="#000080" />
            <circle r="4" fill="#f8e800" />
            <text x="-25" y="17" fill="#00c000">Y</text><text x="43" y="13" fill="#f00000">X</text><text x="0" y="56" fill="#000080">Z</text>
          </g>
          <g transform="translate(2740,220)" stroke="#7b7676" stroke-width="1">
            <path d="M62 65L130 34L245 52L178 82Z" fill="#868484" />
            <path d="M62 65L178 82V211L62 194Z" fill="#cacaca" />
            <path d="M178 82L245 52V181L178 211Z" fill="#9e9d9d" />
            <path d="M91 69V198M149 78V207M62 98L178 115M62 162L178 179M178 82V211" fill="none" stroke-width="2.4" />
            <path d="M195 75V203M229 60V188M178 115L245 85M178 179L245 149" fill="none" stroke-width="2" />
            <path d="M91 69L157 39M149 78L214 48M82 58L196 74M114 42L229 60" fill="none" stroke-width="1.4" />
            <g stroke="none"><text class="big" x="121" y="151" fill="#2fcc2f">-Y</text><text class="big" x="211" y="144" fill="#ee3333">-X</text><text class="cz" x="157" y="66" fill="#2d2d8c">+Z</text></g>
          </g>
        </svg>

        <section class="panel">
          <div class="panel-head">
            <h2>Materialien</h2>
            <button class="mdi" aria-label="Abdocken"><svg viewBox="0 0 18 20" fill="none" stroke="#333" stroke-width="2"><path d="M6 6V2H17V10H13M5 3H18" /><rect x="1" y="9" width="11" height="8" /><path d="M1 9H12" stroke-width="4" /></svg></button>
            <button class="mdi" aria-label="Schließen"><svg viewBox="0 0 18 20"><path d="M3 4L15 16M15 4L3 16" stroke="#333" stroke-width="4" /></svg></button>
          </div>
          <div class="tblmenu"><button v-for="m in tblMenu" :key="m" class="menu">{{ m }}</button></div>
          <div class="toolbar tbl">
            <label class="combo struct">
              <svg class="cico" viewBox="0 0 36 36" v-html="icons.struct"></svg>
              <select aria-label="Kategorie"><option>Struktur</option></select>
              <svg class="chev" viewBox="0 0 16 10"><path d="M1 1L8 8L15 1" fill="none" stroke="#555" stroke-width="2" /></svg>
            </label>
            <button class="step prev" aria-label="Zurück"></button><button class="step next" aria-label="Weiter"></button>
            <i class="sep"></i>
            <label class="combo basis">
              <svg class="cico" viewBox="0 0 36 36" v-html="icons.tmember"></svg>
              <select aria-label="Gruppe"><option>Basisobjekte</option></select>
              <svg class="chev" viewBox="0 0 16 10"><path d="M1 1L8 8L15 1" fill="none" stroke="#555" stroke-width="2" /></svg>
            </label>
            <button class="step prev" aria-label="Zurück"></button><button class="step next" aria-label="Weiter"></button>
            <template v-for="(b, i) in tblBar" :key="i">
              <i v-if="b.k === '|'" class="sep"></i>
              <button v-else class="tb" :class="{ on: b.on }"><svg class="ico" viewBox="0 0 36 36" v-html="icons[b.k]"></svg></button>
            </template>
          </div>

          <div class="gridwrap">
            <div class="gridclip">
              <table>
                <colgroup><col class="c0" /><col class="c1" /><col class="c2" /><col class="c3" /><col v-for="u in units" :key="u[0]" class="cn" /></colgroup>
                <thead>
                  <tr class="strip"><td v-for="n in 10" :key="n"></td></tr>
                  <tr class="heads">
                    <th class="rh">Material<br />Nr.</th>
                    <th><br />Name des Materials</th>
                    <th>Material-<br />typ</th>
                    <th><br />Materialmodell</th>
                    <th v-for="u in units" :key="u[0]">{{ u[0] }}<br />{{ u[1] }}<sup>{{ u[2] }}</sup>{{ u[3] }}</th>
                  </tr>
                </thead>
                <tbody>
                  <tr v-for="(r, i) in rows" :key="i" :class="{ cur: i === 0, blue: i === 1 }">
                    <th class="rh">{{ i + 1 }}</th>
                    <template v-if="r.c">
                      <td v-for="k in 3" :key="k" :class="{ focus: i === 0 && k === 1 }"><i class="chip" :style="{ background: r.c[2 * k - 2] }"></i>{{ r.c[2 * k - 1] }}</td>
                    </template>
                    <template v-else><td></td><td></td><td></td></template>
                    <td v-for="(v, j) in r.v" :key="'v' + j" class="num" :class="{ tint: j === 2 }">{{ v }}</td>
                  </tr>
                </tbody>
              </table>
            </div>
            <div class="gtrack"><i></i></div>
          </div>
          <div class="htrack"><i></i></div>

          <div class="sheettabs">
            <button class="pg" aria-label="Erste"><svg viewBox="0 0 16 16"><path d="M2 1V15" stroke="#888" stroke-width="3" /><path d="M15 1L5 8L15 15Z" fill="#888" /></svg></button>
            <button class="pg" aria-label="Vorige"><svg viewBox="0 0 16 16"><path d="M12 1L3 8L12 15Z" fill="#888" /></svg></button>
            <span class="pos">1 von 13</span>
            <button class="pg" aria-label="Nächste"><svg viewBox="0 0 16 16"><path d="M4 1L13 8L4 15Z" fill="#444" /></svg></button>
            <button class="pg" aria-label="Letzte"><svg viewBox="0 0 16 16"><path d="M14 1V15" stroke="#444" stroke-width="3" /><path d="M1 1L11 8L1 15Z" fill="#444" /></svg></button>
            <button v-for="(t, i) in tabs" :key="t" class="sheet" :class="{ active: i === 0 }">{{ t }}</button>
          </div>
        </section>
      </div>
    </div>

    <div class="toolbar low">
      <button class="tb"><svg class="ico" viewBox="0 0 36 36" v-html="icons.cs"></svg></button>
      <label class="combo cs">
        <i class="sw"></i>
        <select aria-label="Koordinatensystem"><option>1 - Global XYZ</option></select>
        <svg class="chev" viewBox="0 0 16 10"><path d="M1 1L8 8L15 1" fill="none" stroke="#555" stroke-width="2" /></svg>
      </label>
      <template v-for="(b, i) in low1" :key="i">
        <i v-if="b.k === '|'" class="sep"></i>
        <button v-else-if="b.k === '>'" class="dd" aria-label="Mehr"></button>
        <button v-else class="tb"><svg class="ico" viewBox="0 0 36 36" v-html="icons[b.k]"></svg></button>
      </template>
      <span class="grow"></span>
      <template v-for="(b, i) in low2" :key="'r' + i">
        <i v-if="b.k === '_'" class="space"></i>
        <button v-else class="tb" :class="{ on: b.on }"><svg class="ico" viewBox="0 0 36 36" v-html="icons[b.k]"></svg></button>
      </template>
    </div>

    <footer class="status">
      <span class="grow"></span>
      <span class="cell a"></span><span class="cell b">KS: Global XYZ</span><span class="cell c">Ebene: XY</span>
      <span class="cell d"></span><span class="cell d"></span><span class="cell d"></span>
    </footer>
  </div>
</template>

<style>
body { margin: 0; }
svg text { font-family: "Open Sans", sans-serif; }
</style>

<style scoped>
* { box-sizing: border-box; }
.window {
  height: 100vh;
  display: flex;
  flex-direction: column;
  overflow: hidden;
  background: #f7f7f7;
  font: 20px/24px "Open Sans", "Noto Sans", sans-serif;
  color: #000;
  border-left: 2px solid #fdfdfd;
}
button { font: inherit; color: inherit; background: none; border: 0; padding: 0; margin: 0; }
select, input { font: inherit; color: inherit; border: 0; background: none; appearance: none; padding: 0; min-width: 0; }
i { font-style: normal; display: block; }
.defs { position: absolute; }
.grow { flex: 1; }
.backdrop { flex: none; height: 14px; background: linear-gradient(90deg, #f3f0e6, #ebebe2 50%, #e6ddd6); border-bottom: 2px solid #c8c8c6; }

.title { flex: none; height: 45px; display: flex; align-items: center; background: #eef2fb; padding-right: 6px; }
.title-text { flex: 1; margin-left: 4px; font-size: 21px; }
.cap { width: 92px; display: flex; justify-content: center; }
.cap svg { width: 20px; height: 20px; }

.ico { width: 35px; height: 35px; display: block; overflow: visible; flex: none; }
.title .ico { width: 34px; height: 34px; }
.menubar { flex: none; height: 40px; display: flex; align-items: center; border-bottom: 1px solid #dedede; }
.menubar .ico { width: 32px; height: 32px; margin-right: 8px; }
.menu { margin-right: 15px; white-space: nowrap; }
.menubar .menu { margin-right: 14px; }
.searcharrow { width: 10px; height: 14px; margin-right: 7px; }
.search { width: 455px; height: 34px; background: #e8e8f3; padding-left: 4px; }
.search::placeholder { color: #777; opacity: 1; }
.findicon { width: 30px; height: 26px; margin: 0 5px; }
.license { margin-right: 6px; white-space: nowrap; }
.mdi { width: 36px; display: flex; justify-content: center; }
.mdi svg { width: 18px; height: 20px; }

.toolbar { flex: none; height: 56px; display: flex; align-items: center; border-bottom: 1px solid #dedede; }
.toolbar.second { height: 55px; border-bottom: 0; position: relative; }
.grip { width: 2px; height: 46px; border-left: 2px dotted #b8b8b8; margin: 0 11px 0 5px; flex: none; }
.tb { width: 45px; height: 42px; display: flex; justify-content: center; align-items: center; flex: none; }
.tb.on { width: 43px; margin: 0 1px; background: #cce8ff; border: 1px solid #99d1ff; border-radius: 3px; }
.sep { width: 1px; height: 44px; margin: 0 7px; border-left: 1px solid #a0a0a0; flex: none; }
.edge { width: 21px; height: 100%; position: relative; flex: none; }
.edge::before { content: ""; position: absolute; left: 2px; top: 0; bottom: 0; border-left: 1px solid #d4d4d4; }
.edge::after { content: ""; position: absolute; left: 9px; top: 5px; bottom: 5px; border-left: 2px dotted #b8b8b8; }
.dd { width: 24px; height: 42px; flex: none; display: flex; align-items: center; justify-content: center; }
.dd::after { content: ""; border: 6px solid transparent; border-top: 8px solid #222; border-bottom: 0; }
.dd.off::after { border-top-color: #777; }
.combo { height: 38px; display: flex; align-items: center; background: #e8e8f3; position: relative; flex: none; }
.combo select { flex: 1; align-self: stretch; }
.chev { position: absolute; right: 8px; top: 15px; width: 16px; height: 10px; pointer-events: none; }
.lf { width: 538px; padding-left: 5px; }
.sw { width: 22px; height: 22px; background: #ccffff; margin-right: 6px; flex: none; }
.g { width: 60px; height: 26px; background: #000; color: #fff; font-weight: 400; text-align: center; margin-right: 10px; line-height: 26px; }
.lfno { margin-right: 7px; padding-right: 8px; border-right: 1px solid #fff; height: 30px; line-height: 30px; }
.step { width: 30px; height: 37px; margin-left: 1px; background: #e8e8f3; display: flex; align-items: center; justify-content: center; flex: none; }
.step::after { content: ""; border: 7px solid transparent; }
.step.prev { background: #d2d2d2; }
.step.prev::after { border-right: 8px solid #555; border-left: 0; }
.step.next::after { border-left: 8px solid #000; border-right: 0; }
.more { width: 30px; display: flex; justify-content: center; }
.more svg { width: 16px; height: 14px; }
.cursor { position: absolute; right: 120px; top: 15px; width: 26px; height: 40px; }

.main { flex: 1; min-height: 0; display: flex; }
.navigator { width: 570px; flex: none; display: flex; flex-direction: column; min-height: 0; margin-right: 8px; }
.panel-head { flex: none; height: 41px; background: #d7e4f2; display: flex; align-items: center; padding: 0 4px 0 10px; }
.panel-head h2 { flex: 1; margin: 0; font: 700 21px/28px "Open Sans", sans-serif; color: #3f3f3f; }
.panel-head .mdi { width: 40px; }
.navigator .panel-head { padding-right: 1px; }
.treebox { flex: 1; min-height: 0; display: flex; border: 2px solid #c8c8d6; border-top-width: 1px; margin-top: 1px; background: #fff; overflow: hidden; }
.tree { flex: 1; list-style: none; margin: 0; padding: 1px 0 0; }
.tree li { height: 36px; display: flex; align-items: center; white-space: nowrap; }
.tree .root { padding-left: 4px; gap: 10px; }
.tico { width: 32px; height: 32px; flex: none; display: block; overflow: visible; }
.tico.s { width: 26px; height: 26px; }
.exp { width: 30px; display: flex; justify-content: center; flex: none; }
.exp svg { width: 16px; height: 16px; }
.tree .l1 { padding-left: 6px; }
.tree .l2 { padding-left: 46px; }
.tree .l3 { padding-left: 86px; }
.node { display: flex; align-items: center; height: 36px; gap: 10px; padding-left: 4px; margin-left: 4px; }
.tree .sel .node { min-width: 297px; background: #cce8ff; border-radius: 3px; }
.tree .small .tico { width: 16px; height: 16px; }
.tree .bold { font-weight: 700; }
.vtrack { width: 31px; background: #f0f0f0; padding: 35px 0 0 5px; flex: none; }
.vthumb { width: 19px; height: 95%; background: #858585; }
.navtabs { flex: none; height: 42px; display: flex; border: 2px solid #c8c8d6; border-top: 0; }
.navtabs button { width: 56px; height: 38px; display: flex; align-items: center; justify-content: center; border-right: 2px solid #c8c8d6; border-bottom: 2px solid #c8c8d6; background: #ececec; }
.navtabs .active { height: 40px; background: #fff; border-bottom: 0; }

.work { flex: 1; min-width: 0; display: flex; flex-direction: column; }
.scene { flex: 1; min-height: 0; width: 100%; display: block; background: #fcfcfc; }
.scene text { font-size: 20px; text-anchor: middle; }
.scene .big { font-size: 27px; font-weight: 700; }
.scene .cz { font-size: 16px; font-weight: 700; }

.panel { flex: none; padding-top: 8px; }
.tblmenu { height: 39px; display: flex; align-items: center; border-bottom: 1px solid #dedede; padding-left: 7px; }
.toolbar.tbl { height: 57px; border-bottom: 0; padding-left: 2px; }
.struct { width: 400px; }
.basis { width: 540px; margin-left: 4px; }
.cico { width: 31px; height: 31px; margin: 0 9px 0 4px; flex: none; overflow: visible; }

.gridwrap { display: flex; height: 363px; border-top: 2px solid #c8c8d6; border-left: 1px solid #c8c8d6; }
.gridclip { flex: 1; min-width: 0; overflow: hidden; background: #fff; }
table { border-collapse: separate; border-spacing: 0; table-layout: fixed; width: 2500px; }
.c0 { width: 120px; } .c1 { width: 500px; } .c2 { width: 280px; } .c3 { width: 400px; } .cn { width: 200px; }
td, th { padding: 0; font-weight: 400; border-right: 1px solid #dedede; border-bottom: 1px solid #dedede; height: 32px; white-space: nowrap; overflow: hidden; }
.strip td { height: 19px; background: #e1e1e1; border-color: #f7f7f7; }
.heads th { height: 64px; background: #f0f0f0; border-right-color: #cfcfcf; border-bottom-color: #c8c8c8; line-height: 31px; vertical-align: bottom; }
th.rh, .heads th.rh { background: #e1e1e1; border-right-color: #f7f7f7; border-bottom-color: #f7f7f7; text-align: center; }
sup { font-size: 16px; line-height: 0; vertical-align: 5px; }
.cur td { background: #ffffe1; }
.cur td.num { background: #fafadc; }
.blue td { color: #1e90ff; }
td.num { text-align: right; padding-right: 4px; }
td.tint { background: #fafaf5; }
td.focus { outline: 1px dotted #000; outline-offset: -2px; }
.chip { display: inline-block; width: 22px; height: 22px; margin: 0 10px 0 4px; vertical-align: -2px; }
.gtrack { width: 36px; padding: 33px 7px 0 9px; background: #f0f0f0; }
.gtrack i { height: 196px; background: #858585; }
.htrack { height: 33px; background: #f0f0f0; padding: 7px 285px 7px 35px; }
.htrack i { height: 19px; background: #858585; }

.sheettabs { height: 40px; display: flex; align-items: flex-start; border-top: 2px solid #c8c8d6; }
.pg { width: 34px; height: 36px; display: flex; align-items: center; justify-content: center; }
.pg svg { width: 16px; height: 16px; }
.pos { width: 121px; text-align: center; line-height: 36px; }
.sheet { height: 36px; min-width: 91px; padding: 0 6px; background: #ececec; border: 2px solid #c8c8d6; border-top: 0; border-left: 0; }
.sheet.active { background: #fff; height: 38px; border-bottom: 0; border-left: 2px solid #c8c8d6; padding-bottom: 2px; }

.toolbar.low { height: 48px; border-top: 1px solid #dedede; border-bottom: 0; padding-right: 2px; }
.low .ico { width: 32px; height: 32px; }
.low .tb { width: 41px; height: 38px; }
.low .tb.on { width: 39px; }
.low .cs { width: 400px; padding-left: 6px; }
.low .cs .sw { margin-right: 10px; }
.low .sep { height: 38px; }
.low .space { width: 14px; }

.status { flex: none; height: 35px; display: flex; align-items: center; border-bottom: 2px solid #c4c4c6; background: linear-gradient(90deg, #e6e7f2 13%, #d4d4de 17%, #d4d4de 78%, #e6e7f2 86%); }
.cell { border-left: 1px solid #bdbdc4; height: 31px; line-height: 31px; padding-left: 5px; }
.a { width: 206px; } .b { width: 406px; } .c { width: 126px; } .d { width: 146px; }
</style>
